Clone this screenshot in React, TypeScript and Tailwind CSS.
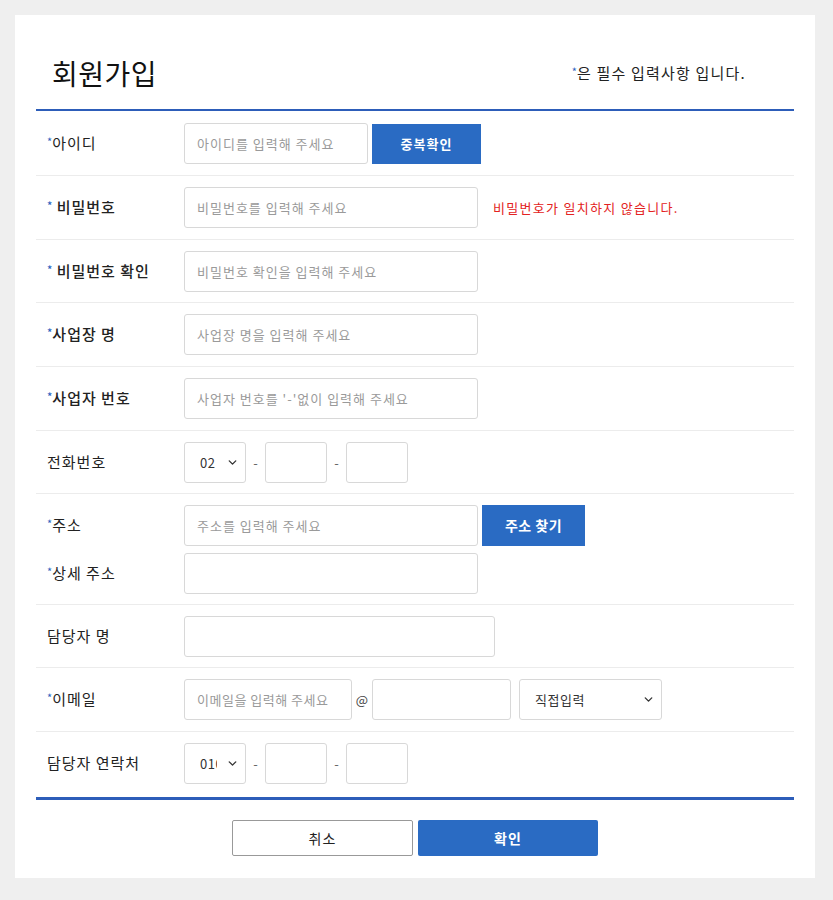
import { ChevronDown } from 'lucide-react'

const font = { fontFamily: '"Noto Sans CJK KR", "Noto Sans", sans-serif' }

function Req() {
    return <span className="text-[#2c62c0] text-[11px] relative -top-[3px] tracking-normal">*</span>
}

function Row({ label, children, bold, last, pad = 'py-[11px]' }: { label: React.ReactNode; children: React.ReactNode; bold?: boolean; last?: boolean; pad?: string }) {
    return (
        <div className={`flex items-center pl-[11px] ${pad} ${last ? '' : 'border-b border-[#ececec]'}`}>
            <div className={`w-[137px] text-[15px] tracking-[1px] text-[#222] ${bold ? 'font-medium' : ''}`}>{label}</div>
            <div className="flex items-center">{children}</div>
        </div>
    )
}

function Input({ w, placeholder, tight }: { w: string; placeholder?: string; tight?: boolean }) {
    return (
        <input
            placeholder={placeholder}
            className={`${w} h-[41px] border border-[#d8d8d8] rounded-[3px] px-[12px] text-[13px] ${tight ? 'tracking-[0.5px]' : 'tracking-[1px]'} text-[#333] placeholder:text-[#9a9a9a] outline-none`}
            style={font}
        />
    )
}

function Select({ w, value, pl }: { w: string; value: string; pl: string }) {
    return (
        <div className={`relative ${w} h-[41px]`}>
            <select
                defaultValue={value}
                className={`appearance-none w-full h-full border border-[#d8d8d8] rounded-[3px] ${pl} pr-[28px] text-[13px] tracking-[0.5px] text-[#333] bg-white outline-none`}
                style={font}
            >
                <option>{value}</option>
            </select>
            <ChevronDown size={13} strokeWidth={2.5} className="absolute right-[7px] top-[14px] text-[#333] pointer-events-none" />
        </div>
    )
}

function Dash() {
    return <span className="w-[19px] text-center text-[13px] text-[#666]">-</span>
}

export default function App() {
    return (
        <div className="min-h-[900px] bg-[#efefef] pt-[15px] pl-[15px]" style={font}>
            <div className="w-[800px] bg-white px-[21px]">
                <header className="flex items-center justify-between pt-[40px] pb-[18px] pl-[16px] pr-[48px]">
                    <h1 className="text-[28px] leading-[36px] tracking-[0.5px] text-[#111]">회원가입</h1>
                    <p className="text-[15px] tracking-[1.2px] text-[#222]"><Req />은 필수 입력사항 입니다.</p>
                </header>

                <div className="border-t-2 border-[#2d5db9]">
                    <Row pad="pt-[12px] pb-[11px]" label={<><Req />아이디</>}>
                        <Input w="w-[184px]" placeholder="아이디를 입력해 주세요" />
                        <button className="ml-[4px] w-[109px] h-[40px] bg-[#2a6bc3] text-white text-[13px] tracking-[1px] font-bold">중복확인</button>
                    </Row>
                    <Row bold label={<><Req /> 비밀번호</>}>
                        <Input w="w-[294px]" placeholder="비밀번호를 입력해 주세요" />
                        <span className="ml-[15px] text-[13px] tracking-[1.3px] text-[#e32222]">비밀번호가 일치하지 않습니다.</span>
                    </Row>
                    <Row bold pad="pt-[11px] pb-[10px]" label={<><Req /> 비밀번호 확인</>}>
                        <Input w="w-[294px]" placeholder="비밀번호 확인을 입력해 주세요" />
                    </Row>
                    <Row bold label={<><Req />사업장 명</>}>
                        <Input w="w-[294px]" placeholder="사업장 명을 입력해 주세요" />
                    </Row>
                    <Row bold label={<><Req />사업자 번호</>}>
                        <Input w="w-[294px]" placeholder="사업자 번호를 '-'없이 입력해 주세요" />
                    </Row>
                    <Row pad="pt-[11px] pb-[10px]" label="전화번호">
                        <Select w="w-[62px]" value="02" pl="pl-[15px]" />
                        <Dash />
                        <Input w="w-[62px]" />
                        <Dash />
                        <Input w="w-[62px]" />
                    </Row>

                    <div className="pl-[11px] pt-[11px] pb-[10px] border-b border-[#ececec] flex flex-col gap-[7px]">
                        <div className="flex items-center">
                            <div className="w-[137px] text-[15px] tracking-[1px] text-[#222]"><Req />주소</div>
                            <Input w="w-[294px]" placeholder="주소를 입력해 주세요" />
                            <button className="ml-[4px] w-[103px] h-[41px] bg-[#2a6bc3] text-white text-[14px] tracking-[0.5px] font-bold">주소 찾기</button>
                        </div>
                        <div className="flex items-center">
                            <div className="w-[137px] text-[15px] tracking-[1px] text-[#222]"><Req />상세 주소</div>
                            <Input w="w-[294px]" />
                        </div>
                    </div>

                    <Row pad="pt-[11px] pb-[10px]" label="담당자 명">
                        <Input w="w-[311px]" />
                    </Row>
                    <Row label={<><Req />이메일</>}>
                        <Input w="w-[168px]" tight placeholder="이메일을 입력해 주세요" />
                        <span className="w-[20px] text-center text-[13px] text-[#444]">@</span>
                        <Input w="w-[139px]" />
                        <div className="ml-[8px]">
                            <Select w="w-[143px]" value="직접입력" pl="pl-[15px]" />
                        </div>
                    </Row>
                    <Row last pad="pt-[11px] pb-[13px]" label="담당자 연락처">
                        <Select w="w-[62px]" value="010" pl="pl-[15px]" />
                        <Dash />
                        <Input w="w-[62px]" />
                        <Dash />
                        <Input w="w-[62px]" />
                    </Row>
                </div>

                <div className="border-t-[3px] border-[#2d5db9] flex justify-center gap-[5px] pt-[20px] pb-[22px]">
                    <button className="w-[181px] h-[36px] border border-[#999] rounded-[2px] bg-white text-[14px] tracking-[1px] text-[#222]">취소</button>
                    <button className="w-[180px] h-[36px] rounded-[2px] bg-[#2a6bc3] text-[14px] tracking-[1px] font-bold text-white">확인</button>
                </div>
            </div>
        </div>
    )
}
